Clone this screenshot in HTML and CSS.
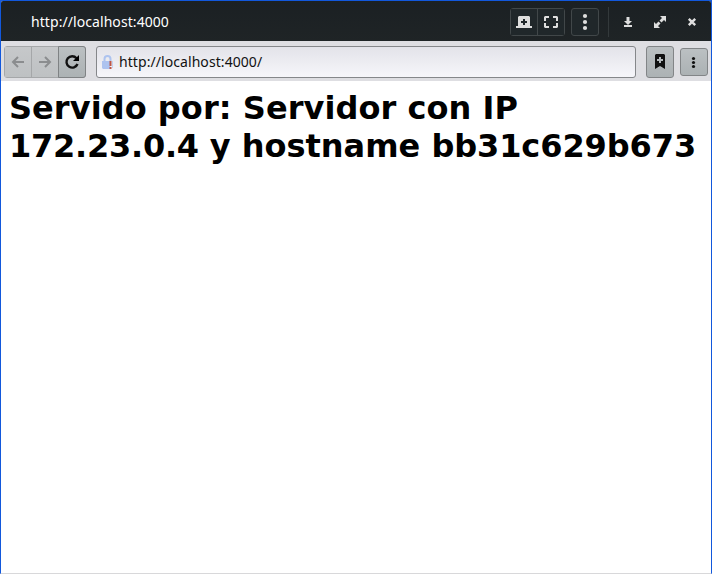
FILE: index.html
```html
<!DOCTYPE html>
<html lang="es">
<head>
<meta charset="utf-8">
<title>http://localhost:4000</title>
<link rel="stylesheet" href="styles.css">
</head>
<body>
<div class="window">
  <header class="titlebar">
    <span class="title">http://localhost:4000</span>
    <div class="group">
      <button class="dark"><svg width="28" height="28"><path fill-rule="evenodd" d="M9 8h10l1 1v9h2v2H6v-2h2V9zM13 11v2h-2v2h2v2h2v-2h2v-2h-2v-2z"/></svg></button>
      <button class="dark"><svg width="28" height="28"><path d="M8 8h4v2H9v3H7V9zM16 8h4l1 1v4h-2v-3h-3zM7 15h2v3h3v2H8l-1-1zM19 15h2v4l-1 1h-4v-2h3z"/></svg></button>
    </div>
    <button class="dark more"><svg width="28" height="28"><circle cx="14" cy="8" r="2.100"/><circle cx="14" cy="14" r="2.100"/><circle cx="14" cy="20" r="2.100"/></svg></button>
    <div class="separator"></div>
    <div class="controls">
      <svg width="32" height="28"><path d="M14.500 9h3v4h2.500l-4 4-4-4h2.500zM12 17h8v2h-8z"/></svg>
      <svg width="32" height="28"><path d="M16 8h6v6l-2-2-2.500 2.500-2-2L18 10zM10 14l2 2 2.500-2.500 2 2L14 18l2 2h-6z"/></svg>
      <svg width="32" height="28"><path d="M12.800 10.800l6.400 6.400M19.200 10.800l-6.400 6.400" class="cross"/></svg>
    </div>
  </header>
  <nav class="toolbar">
    <div class="navigation">
      <button disabled><svg width="26" height="30"><path d="M19 15H8M13 10l-5 5 5 5" class="arrow"/></svg></button>
      <button disabled><svg width="26" height="30"><path d="M7 15h11M13 10l5 5-5 5" class="arrow"/></svg></button>
      <button class="reload"><svg width="26" height="30"><path d="M17.500 11.200A5.700 5.700 0 1 0 18.500 17" class="reload-arc"/><path d="M20 8v6h-6z"/></svg></button>
    </div>
    <div class="address">
      <svg class="lock" width="14" height="16"><path d="M3.500 8V5a3 3 0 0 1 6 0v2" class="shackle"/><path class="lock-body" d="M1 7h8v8H2l-1-1z"/><path class="lock-edge" d="M11 7h1v7h-1z"/><path class="alert" d="M8.500 7h2v5h-2zM8.500 13h2v2h-2z"/></svg>
      <span>http://localhost:4000/</span>
    </div>
    <button class="bookmark"><svg width="26" height="30"><path fill-rule="evenodd" d="M9 7h8l1 1v14l-5-3-5 3V8zM12 10v2h-2v2h2v2h2v-2h2v-2h-2v-2z"/></svg></button>
    <button class="menu"><svg width="26" height="26"><circle cx="12.500" cy="9.500" r="1.600"/><circle cx="12.500" cy="13.500" r="1.600"/><circle cx="12.500" cy="17.500" r="1.600"/></svg></button>
  </nav>
  <main><h1><span class="intro">Servido por: Servidor con IP</span> <span class="ip">172.23.0.4 </span>y hostname <span class="host">bb31c629b673</span></h1></main>
</div>
</body>
</html>
```
FILE: styles.css
```css
* { box-sizing: border-box; }
body { margin: 0; background: #1d5bd8; }
svg { display: block; flex: none; }
button { display: block; margin: 0; padding: 0; border: 0; }
.window {
  height: 574px;
  display: flex;
  flex-direction: column;
  border: 1px solid #1258dc;
  border-bottom-color: #d8d8da;
  border-radius: 3px 3px 0 0;
  background: #fff;
  overflow: hidden;
}
.titlebar {
  height: 40px;
  flex: none;
  display: flex;
  align-items: center;
  padding: 1px 3px 0 30px;
  background: linear-gradient(#1b2023, #1f2426);
  color: #fff;
  font: 14px/20px "Noto Sans", sans-serif;
  letter-spacing: 0.07px;
}
.titlebar svg { fill: #dedede; }
.title { flex: 1; margin-top: 1px; }
.group { display: flex; width: 55px; height: 28px; border: 1px solid #414749; border-radius: 3px; }
.group .dark { width: 27px; height: 26px; }
.group .dark + .dark { border-left: 1px solid #414749; }
.group svg { margin: -1px; }
.dark { background: #20272a; }
.more { width: 28px; height: 28px; margin-left: 6px; border: 1px solid #414749; border-radius: 3px; }
.more svg { margin: -1px; }
.separator { width: 1px; height: 30px; margin: 0 3px 0 9px; background: #33393b; }
.controls { display: flex; }
.cross { stroke: #dedede; stroke-width: 2.4; }
.toolbar {
  height: 40px;
  flex: none;
  display: flex;
  align-items: center;
  padding: 2px 3px 0;
  background: #dedee2;
}
.navigation { display: flex; width: 82px; height: 32px; border: 1px solid #a5a7a9; border-radius: 3px; }
.navigation button { width: 26px; height: 30px; background: linear-gradient(#c6c8ca, #bec1c3); }
.navigation button + button { width: 27px; border-left: 1px solid #a5a7a9; }
.navigation .reload {
  width: 28px;
  height: 32px;
  flex: none;
  margin: -1px -1px 0 0;
  border: 1px solid #7f8284;
  border-radius: 0 3px 3px 0;
  background: linear-gradient(#bbc0c2, #acb2b4);
}
.navigation button.reload { width: 28px; height: 32px; border: 1px solid #7f8284; }
.arrow { fill: none; stroke: #8b8d8f; stroke-width: 2; }
.reload-arc { fill: none; stroke: #111; stroke-width: 2.4; }
.address {
  width: 540px;
  height: 32px;
  display: flex;
  align-items: center;
  margin: 0 10px;
  padding-left: 4px;
  border: 1px solid #85878a;
  border-radius: 3px;
  background: linear-gradient(#e3e3e9, #f6f6fa);
  color: #111;
  font: 14px/20px "Noto Sans", sans-serif;
  letter-spacing: 0.07px;
}
.lock { margin-right: 4px; }
.shackle { fill: none; stroke: #adc3ef; stroke-width: 2; }
.lock-body { fill: #adc3ef; }
.lock-edge { fill: #c3d1f1; }
.alert { fill: #bd5747; }
.bookmark, .menu {
  width: 28px;
  height: 32px;
  border: 1px solid #828587;
  border-radius: 3px;
  background: linear-gradient(#bbc0c2, #acb2b4);
}
.bookmark svg, .menu svg { fill: #111; }
.menu { height: 28px; margin-left: 6px; }
main { flex: 1; padding: 8px; }
h1 { margin: 0; color: #000; font: bold 32px/38px "DejaVu Sans", sans-serif; }
.intro { letter-spacing: 0.06px; }
.ip { letter-spacing: -0.25px; }
.host { letter-spacing: -0.09px; }
```
